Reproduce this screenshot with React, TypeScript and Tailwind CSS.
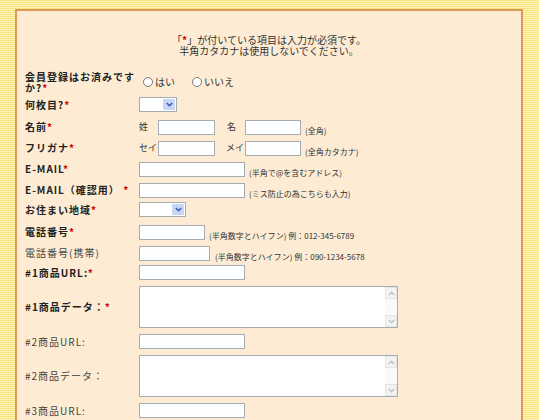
import React from "react";

const font = "font-['Noto_Sans_CJK_JP','Noto_Sans',sans-serif]";

const Req = () => <span className="font-bold text-[#d40000]">*</span>;

const Chevron = ({ up = false, color = "#3a56a8" }: { up?: boolean; color?: string }) => (
  <svg width="7" height="5" viewBox="0 0 7 5">
    <path d={up ? "M0.8 4L3.5 1.2L6.2 4" : "M0.8 1L3.5 3.8L6.2 1"} fill="none" stroke={color} strokeWidth="1.4" />
  </svg>
);

const Input = ({ w }: { w: string }) => (
  <div className={`h-[15px] shrink-0 ${w} border border-[#a5acb2] bg-[#fdfeff]`} />
);

const Select = ({ w }: { w: string }) => (
  <div className={`flex h-[15px] shrink-0 ${w} border border-[#a5acb2] bg-white`}>
    <div className="flex-1" />
    <div className="m-px flex w-[12px] items-center justify-center rounded-[1px] bg-[#c6d6f8]">
      <Chevron />
    </div>
  </div>
);

const TextArea = () => (
  <div className="flex h-[42px] w-[259px] border border-[#a5acb2] bg-white">
    <div className="flex-1" />
    <div className="flex w-[12px] flex-col justify-between bg-[#fafafa]">
      <div className="flex h-[12px] items-center justify-center border border-[#e4e4e4] bg-[#f3f3f3]">
        <Chevron up color="#c0c0c0" />
      </div>
      <div className="flex h-[12px] items-center justify-center border border-[#e4e4e4] bg-[#f3f3f3]">
        <Chevron color="#c0c0c0" />
      </div>
    </div>
  </div>
);

const Note = ({ children }: { children: React.ReactNode }) => (
  <span className="whitespace-nowrap text-[8px] leading-[10px] text-[#333]">{children}</span>
);

const Word = ({ w, className = "", children }: { w: string; className?: string; children: React.ReactNode }) => (
  <span className={`shrink-0 whitespace-nowrap text-[9px] leading-[12px] text-[#333] ${w} ${className}`}>
    {children}
  </span>
);

const Row = ({
  label,
  bold = true,
  h = "h-[21px]",
  children,
}: {
  label: React.ReactNode;
  bold?: boolean;
  h?: string;
  children: React.ReactNode;
}) => (
  <div className={`grid grid-cols-[114px_1fr] items-center ${h}`}>
    <div
      className={`whitespace-nowrap pr-[4px] text-[10px] leading-[12px] tracking-[1px] ${
        bold ? "font-bold text-[#222]" : "text-[#444]"
      }`}
    >
      {label}
    </div>
    <div className="flex items-center">{children}</div>
  </div>
);

const Radio = ({ label }: { label: string }) => (
  <span className="flex items-center gap-[2px] whitespace-nowrap text-[10px] leading-[12px] text-[#333]">
    <span className="h-[10px] w-[10px] rounded-full border border-[#7a7a7a] bg-white" />
    {label}
  </span>
);

export default function App() {
  return (
    <div
      className={`${font} h-[420px] w-full overflow-hidden bg-[repeating-linear-gradient(to_bottom,#fbe27e_0px,#fbe27e_1px,#fff4b8_1px,#fff4b8_2px)] pl-[15px] pt-[9px]`}
    >
      <div className="min-h-[480px] w-[508px] border-2 border-[#d99c58] bg-[#fdecd3] pl-[8px] pt-[23px]">
        <div className="pr-[8px] text-center text-[10px] text-[#333]">
          <p className="h-[11px] leading-[11px]">
            「<Req />」が付いている項目は入力が必須です。
          </p>
          <p className="h-[11px] leading-[11px]">半角カタカナは使用しないでください。</p>
        </div>

        <div className="mt-[13px]">
          <Row
            h="h-[25px]"
            label={
              <>
                <span className="block h-[11px] leading-[11px]">会員登録はお済みです</span>
                <span className="block h-[11px] leading-[11px]">
                  か?<Req />
                </span>
              </>
            }
          >
            <div className="flex items-center gap-[17px] pl-[4px]">
              <Radio label="はい" />
              <Radio label="いいえ" />
            </div>
          </Row>

          <Row label={<>何枚目?<Req /></>}>
            <Select w="w-[38px]" />
          </Row>

          <Row label={<>名前<Req /></>}>
            <Word w="w-[19px]">姓</Word>
            <Input w="w-[57px]" />
            <Word w="w-[18px]" className="ml-[12px]">名</Word>
            <Input w="w-[56px]" />
            <span className="ml-[4px]">
              <Note>(全角)</Note>
            </span>
          </Row>

          <Row label={<>フリガナ<Req /></>}>
            <Word w="w-[19px]">セイ</Word>
            <Input w="w-[57px]" />
            <Word w="w-[19px]" className="ml-[11px]">メイ</Word>
            <Input w="w-[56px]" />
            <span className="ml-[4px]">
              <Note>(全角カタカナ)</Note>
            </span>
          </Row>

          <Row label={<>E-MAIL<Req /></>}>
            <Input w="w-[106px]" />
            <span className="ml-[4px]">
              <Note>(半角で@を含むアドレス)</Note>
            </span>
          </Row>

          <Row label={<>E-MAIL（確認用） <Req /></>}>
            <Input w="w-[106px]" />
            <span className="ml-[4px]">
              <Note>(ミス防止の為こちらも入力)</Note>
            </span>
          </Row>

          <Row label={<>お住まい地域<Req /></>}>
            <Select w="w-[47px]" />
          </Row>

          <Row label={<>電話番号<Req /></>}>
            <Input w="w-[66px]" />
            <span className="ml-[4px]">
              <Note>(半角数字とハイフン) 例：012-345-6789</Note>
            </span>
          </Row>

          <Row bold={false} label="電話番号(携帯)">
            <Input w="w-[71px]" />
            <span className="ml-[5px]">
              <Note>(半角数字とハイフン) 例：090-1234-5678</Note>
            </span>
          </Row>

          <Row label={<>#1商品URL:<Req /></>}>
            <Input w="w-[106px]" />
          </Row>

          <Row h="h-[48px]" label={<>#1商品データ：<Req /></>}>
            <TextArea />
          </Row>

          <Row bold={false} label="#2商品URL:">
            <Input w="w-[106px]" />
          </Row>

          <Row bold={false} h="h-[48px]" label="#2商品データ：">
            <TextArea />
          </Row>

          <Row bold={false} label="#3商品URL:">
            <Input w="w-[106px]" />
          </Row>
        </div>
      </div>
    </div>
  );
}
